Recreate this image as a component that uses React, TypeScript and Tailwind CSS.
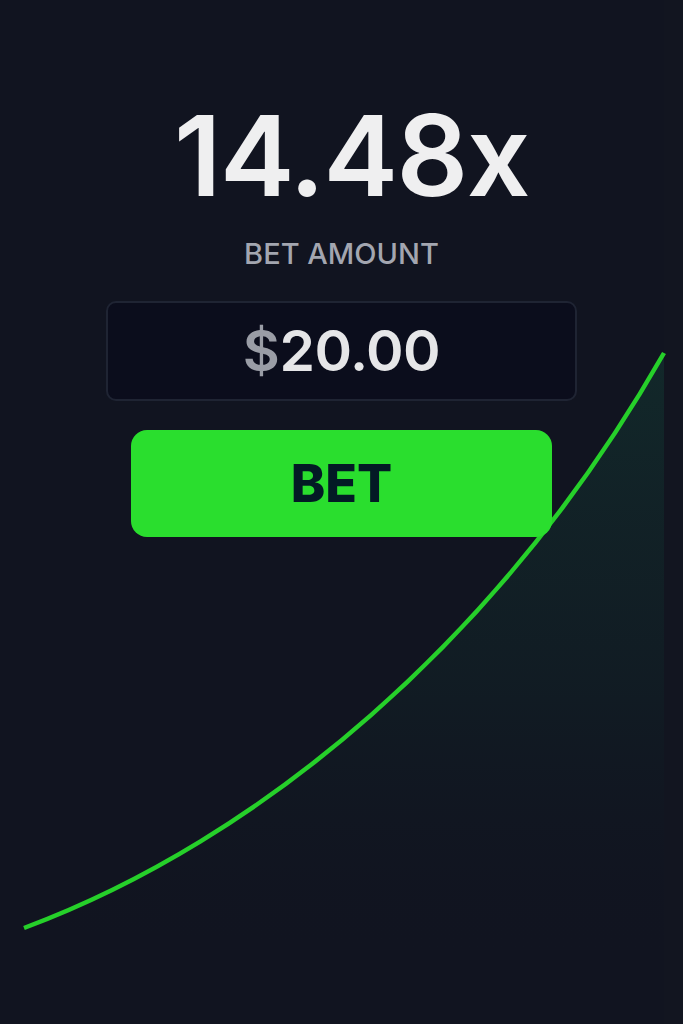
import React from "react";

export default function App() {
  return (
    <div
      className="relative w-[683px] h-[1024px] overflow-hidden bg-[#111420]"
      style={{ fontFamily: "Inter, 'Noto Sans', sans-serif" }}
    >
      <svg
        className="absolute inset-0"
        width="683"
        height="1024"
        viewBox="0 0 683 1024"
      >
        <defs>
          <linearGradient id="fillg" x1="0" y1="0" x2="0" y2="1">
            <stop offset="0" stopColor="#12282a" stopOpacity="1" />
            <stop offset="0.55" stopColor="#111d24" stopOpacity="0.85" />
            <stop offset="1" stopColor="#111420" stopOpacity="0" />
          </linearGradient>
        </defs>
        <rect x="664" y="0" width="19" height="1024" fill="#121520" />
        <path
          d="M24 928 C 260 840, 500 640, 664 353 L 664 960 Z"
          fill="url(#fillg)"
        />
        <path
          d="M24 928 C 260 840, 500 640, 664 353"
          fill="none"
          stroke="#26d02a"
          strokeWidth="4.5"
        />
      </svg>

      <div className="relative flex flex-col items-center pt-[99px]">
        <div className="text-[112px] leading-[112px] font-semibold text-[#efeff0] tracking-[-1.5px] pl-[20px]">
          14.48x
        </div>
        <div className="mt-[27px] text-[29px] leading-[32px] font-medium text-[#a3a6b0]">
          BET AMOUNT
        </div>
        <div className="mt-[31px] w-[471px] h-[100px] rounded-[10px] border-2 border-[#1f2433] bg-[#0b0d1c] flex items-center justify-center">
          <span className="text-[57px] leading-[60px] font-semibold tracking-[-0.5px]">
            <span className="text-[#9a9da6]">$</span>
            <span className="text-[#e6e6e8]">20.00</span>
          </span>
        </div>
        <div className="mt-[29px] w-[421px] h-[107px] rounded-[16px] bg-[#2ade2e] flex items-center justify-center">
          <span className="text-[52px] leading-[56px] font-extrabold text-[#031a25]">
            BET
          </span>
        </div>
      </div>
    </div>
  );
}
